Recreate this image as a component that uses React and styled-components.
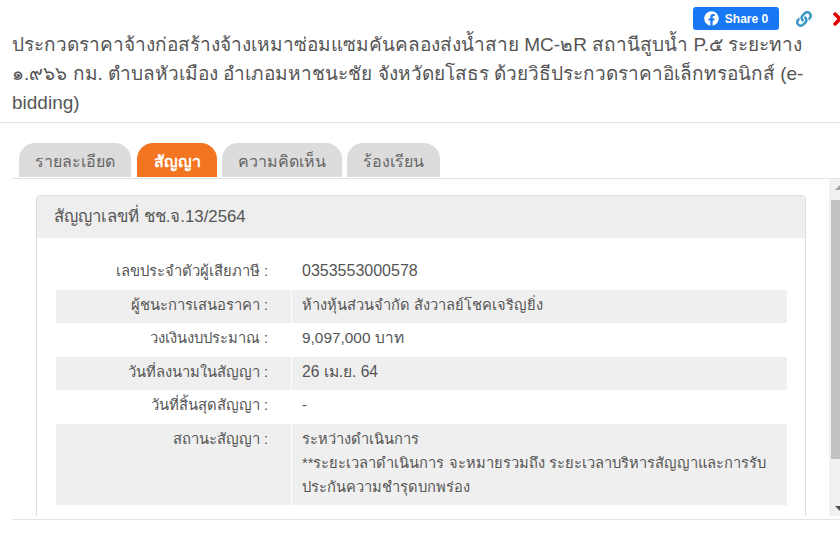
import React from 'react';
import styled, { createGlobalStyle } from 'styled-components';
import { FaFacebook, FaLink, FaTimes } from 'react-icons/fa';

const GlobalStyle = createGlobalStyle`
  html, body {
    margin: 0;
    padding: 0;
    width: 840px;
    height: 548px;
    overflow: hidden;
    background: #fff;
    font-family: "Liberation Sans", Arial, "Noto Sans", sans-serif;
    color: #555;
  }
`;

const rows = [
  { label: 'เลขประจำตัวผู้เสียภาษี :', value: ['0353553000578'], size: 16 },
  { label: 'ผู้ชนะการเสนอราคา :', value: ['ห้างหุ้นส่วนจำกัด สังวาลย์โชคเจริญยิ่ง'], shaded: true },
  { label: 'วงเงินงบประมาณ :', value: ['9,097,000 บาท'], size: 15.4 },
  { label: 'วันที่ลงนามในสัญญา :', value: ['26 เม.ย. 64'], shaded: true, size: 15.6 },
  { label: 'วันที่สิ้นสุดสัญญา :', value: ['-'] },
  {
    label: 'สถานะสัญญา :',
    value: ['ระหว่างดำเนินการ', '**ระยะเวลาดำเนินการ จะหมายรวมถึง ระยะเวลาบริหารสัญญาและการรับประกันความชำรุดบกพร่อง'],
    shaded: true,
  },
];

const tabs = ['รายละเอียด', 'สัญญา', 'ความคิดเห็น', 'ร้องเรียน'];

export default function App () {
  return (
    <Page>
      <GlobalStyle />
      <Header>
        <Actions>
          <ShareButton>
            <FaFacebook size={15} />
            <span>Share 0</span>
          </ShareButton>
          <LinkIcon><FaLink size={16} /></LinkIcon>
          <CloseIcon><FaTimes size={20} /></CloseIcon>
        </Actions>
        <Title>
          ประกวดราคาจ้างก่อสร้างจ้างเหมาซ่อมแซมคันคลองส่งน้ำสาย MC-๒R สถานีสูบน้ำ P.๕ ระยะทาง ๑.๙๖๖ กม. ตำบลหัวเมือง อำเภอมหาชนะชัย จังหวัดยโสธร ด้วยวิธีประกวดราคาอิเล็กทรอนิกส์ (e-bidding)
        </Title>
      </Header>
      <Body>
        <TabStrip>
          {tabs.map((tab, index) => (
            <Tab key={tab} active={index === 1}>{tab}</Tab>
          ))}
        </TabStrip>
        <ScrollArea>
          <ScrollContent>
            <Panel>
              <PanelHeading>สัญญาเลขที่ ชช.จ.13/2564</PanelHeading>
              <PanelBody>
                {rows.map((row) => (
                  <Row key={row.label} shaded={row.shaded}>
                    <Label>{row.label}</Label>
                    <Value size={row.size}>
                      {row.value.map((line) => <div key={line}>{line}</div>)}
                    </Value>
                  </Row>
                ))}
              </PanelBody>
            </Panel>
          </ScrollContent>
          <Scrollbar>
            <ArrowUp />
            <Thumb />
            <ArrowDown />
          </Scrollbar>
        </ScrollArea>
        <BottomLine />
      </Body>
    </Page>
  );
}

const Page = styled('div')`
  width: 840px;
  height: 548px;
  overflow: hidden;
`;

const Header = styled('div')`
  height: 123px;
  padding: 7px 0 0 12px;
  box-sizing: border-box;
  border-bottom: 1px solid #e3e3e3;
`;

const Actions = styled('div')`
  display: flex;
  align-items: center;
  height: 23px;
  margin-left: 681px;
  width: 170px;
`;

const ShareButton = styled('div')`
  display: flex;
  align-items: center;
  justify-content: center;
  gap: 6px;
  width: 86px;
  height: 23px;
  flex: none;
  border-radius: 3px;
  background: #1877f2;
  color: #fff;
  font-size: 12px;
  font-weight: bold;
`;

const LinkIcon = styled('div')`
  display: flex;
  margin-left: 17px;
  color: #3b97c6;
  flex: none;
`;

const CloseIcon = styled('div')`
  display: flex;
  margin-left: 18px;
  color: #e60000;
  flex: none;
`;

const Title = styled('div')`
  width: 810px;
  font-size: 19px;
  line-height: 29px;
  color: #555;
`;

const Body = styled('div')`
  padding: 20px 0 0 12px;
`;

const TabStrip = styled('div')`
  display: flex;
  gap: 5px;
  height: 35px;
  padding-left: 7px;
  border-bottom: 1px solid #e3e3e3;
`;

const Tab = styled('div')`
  display: flex;
  align-items: center;
  justify-content: center;
  height: 34px;
  margin-left: ${(props) => (props.active ? '1px' : '0')};
  padding: ${(props) => (props.active ? '2px 16.5px 0' : '2px 16px 0')};
  box-sizing: border-box;
  border-radius: 16px 16px 0 0;
  background: ${(props) => (props.active ? '#f47521' : '#dcdcdc')};
  color: ${(props) => (props.active ? '#fff' : '#666')};
  font-size: 16px;
  font-weight: ${(props) => (props.active ? 'bold' : 'normal')};
`;

const ScrollArea = styled('div')`
  display: flex;
  height: 337px;
`;

const ScrollContent = styled('div')`
  flex: 1;
  height: 337px;
  box-sizing: border-box;
  overflow: hidden;
  padding: 16px 23px 0 24px;
`;

const Panel = styled('div')`
  width: 770px;
  box-sizing: border-box;
  border: 1px solid #ddd;
  border-radius: 4px;
`;

const PanelHeading = styled('div')`
  height: 42px;
  padding: 0 0 2px 17px;
  box-sizing: border-box;
  display: flex;
  align-items: center;
  background: #eee;
  font-size: 16.8px;
  color: #555;
  border-radius: 3px 3px 0 0;
`;

const PanelBody = styled('div')`
  padding: 18px 18px 30px 19px;
`;

const Row = styled('div')`
  display: grid;
  grid-template-columns: 236px 1fr;
  background: ${(props) => (props.shaded ? '#efefef' : '#fff')};
  line-height: 24px;
  padding: ${(props) => (props.shaded ? '2.25px 0 6.5px' : '3.25px 0 7px')};
`;

const Label = styled('div')`
  padding-right: 24px;
  text-align: right;
  color: #555;
  font-size: 14.8px;
  position: relative;
  &::after {
    content: '';
    position: absolute;
    right: 0;
    top: -8px;
    bottom: -8px;
    width: 1px;
    background: #fff;
  }
`;

const Value = styled('div')`
  padding: 0 8px 0 10px;
  color: #555;
  font-size: ${(props) => props.size || 14.7}px;
`;

const Scrollbar = styled('div')`
  position: relative;
  width: 11px;
  height: 337px;
  flex: none;
  background: #f1f1f1;
`;

const Thumb = styled('div')`
  position: absolute;
  left: 2px;
  top: 21px;
  width: 9px;
  height: 259px;
  background: #c1c1c1;
`;

const ArrowUp = styled('div')`
  position: absolute;
  right: 0;
  top: 6px;
  width: 0;
  height: 0;
  border-left: 5px solid transparent;
  border-bottom: 5px solid #a3a3a3;
`;

const ArrowDown = styled('div')`
  position: absolute;
  right: 0;
  bottom: 5px;
  width: 0;
  height: 0;
  border-left: 5px solid transparent;
  border-top: 5px solid #505050;
`;

const BottomLine = styled('div')`
  height: 1px;
  margin-top: 3px;
  background: #e3e3e3;
`;
